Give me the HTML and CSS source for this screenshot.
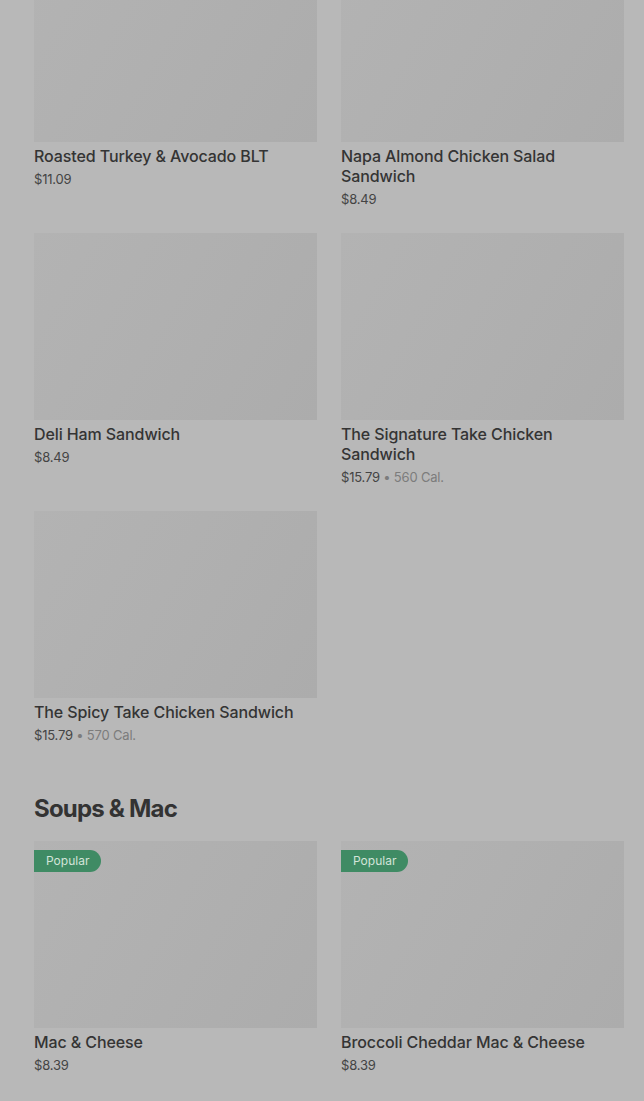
FILE: index.html
```html
<!DOCTYPE html>
<html lang="en">
<head>
  <meta charset="UTF-8">
  <meta name="viewport" content="width=device-width, initial-scale=1.0">
  <title>Menu</title>
  <link rel="stylesheet" href="styles.css">
</head>
<body>
  <div class="menu">
    <div class="grid first">
      <div class="item">
        <div class="thumb"></div>
        <div class="name">Roasted Turkey &amp; Avocado BLT</div>
        <div class="price">$11.09</div>
      </div>
      <div class="item">
        <div class="thumb"></div>
        <div class="name">Napa Almond Chicken Salad Sandwich</div>
        <div class="price">$8.49</div>
      </div>
      <div class="item">
        <div class="thumb"></div>
        <div class="name">Deli Ham Sandwich</div>
        <div class="price">$8.49</div>
      </div>
      <div class="item">
        <div class="thumb"></div>
        <div class="name">The Signature Take Chicken Sandwich</div>
        <div class="price">$15.79 <span class="cal">• 560 Cal.</span></div>
      </div>
      <div class="item">
        <div class="thumb"></div>
        <div class="name">The Spicy Take Chicken Sandwich</div>
        <div class="price">$15.79 <span class="cal">• 570 Cal.</span></div>
      </div>
    </div>

    <h2 class="section-title">Soups &amp; Mac</h2>
    <div class="grid">
      <div class="item">
        <div class="thumb"><span class="badge">Popular</span></div>
        <div class="name">Mac &amp; Cheese</div>
        <div class="price">$8.39</div>
      </div>
      <div class="item">
        <div class="thumb"><span class="badge">Popular</span></div>
        <div class="name">Broccoli Cheddar Mac &amp; Cheese</div>
        <div class="price">$8.39</div>
      </div>
    </div>
  </div>
</body>
</html>
```

FILE: styles.css
```css
body {
  margin: 0;
  background: #b8b8b8;
  font-family: Inter, "Liberation Sans", sans-serif;
  color: #383838;
  overflow: hidden;
}
.menu {
  padding: 0 20px 0 34px;
}
.grid {
  display: grid;
  grid-template-columns: 283px 283px;
  column-gap: 24px;
  row-gap: 25px;
}
.grid.first {
  margin-top: -45px;
}
.thumb {
  position: relative;
  height: 187px;
  background: linear-gradient(120deg, #b3b3b3 0%, #b0b0b0 45%, #acacac 100%);
}
.badge {
  position: absolute;
  left: 0;
  top: 9px;
  background: #3f8b64;
  color: #d3e4d9;
  font-size: 12px;
  line-height: 22px;
  padding: 0 12px 0 12px;
  border-radius: 0 11px 11px 0;
}
.name {
  margin-top: 4px;
  font-size: 16px;
  line-height: 20px;
  font-weight: 500;
  letter-spacing: -0.1px;
  color: #343434;
}
.price {
  margin-top: 4px;
  font-size: 13px;
  line-height: 18px;
  color: #444;
  letter-spacing: -0.2px;
}
.cal {
  color: #7c7c7c;
}
.section-title {
  margin: 50px 0 17px;
  font-size: 24px;
  line-height: 30px;
  font-weight: 700;
  letter-spacing: -0.8px;
  color: #333;
}
```
